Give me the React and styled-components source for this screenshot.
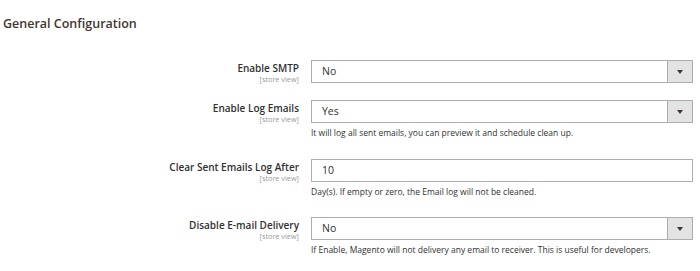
import styled, { createGlobalStyle } from 'styled-components'

const GlobalStyle = createGlobalStyle`
    html, body {
        margin: 0;
        padding: 0;
        background: #fff;
    }
    body {
        font-family: "Open Sans", "Liberation Sans", sans-serif;
        color: #303030;
    }
`

const Page = styled.div`
    width: 700px;
    height: 271px;
    padding: 16px 0 0 3px;
    box-sizing: border-box;
`

const Title = styled.h2`
    margin: 0;
    font-size: 12.5px;
    font-weight: 600;
    color: #41362f;
    line-height: 16px;
`

const Form = styled.div`
    display: grid;
    grid-template-columns: 296px 382px;
    column-gap: 12px;
    margin-top: 28px;
`

const Row = styled.div`
    display: contents;
`

const LabelCell = styled.div`
    text-align: right;
    padding-top: 2px;
    margin-bottom: ${p => p.$space}px;
`

const Label = styled.div`
    font-size: 10px;
    font-weight: 600;
    color: #303030;
    line-height: 13px;
`

const Scope = styled.div`
    font-size: 7.3px;
    color: #999;
    line-height: 9px;
`

const Control = styled.div`
    margin-bottom: ${p => p.$space}px;
`

const Box = styled.div`
    display: flex;
    height: 23px;
    box-sizing: border-box;
    border: 1px solid #adadad;
    background: #fff;
`

const Value = styled.div`
    flex: 1;
    padding-left: 10px;
    font-size: 10.5px;
    line-height: 21px;
    color: #303030;
`

const Toggle = styled.div`
    width: 24px;
    display: flex;
    align-items: center;
    justify-content: center;
    background: #e3e3e3;
    border-left: 1px solid #adadad;
`

const Arrow = styled.span`
    width: 0;
    height: 0;
    border-left: 3px solid transparent;
    border-right: 3px solid transparent;
    border-top: 4px solid #41362f;
`

const Note = styled.div`
    font-size: 8.5px;
    line-height: 11px;
    color: #303030;
    margin-top: 4px;
`

const fields = [
    { label: 'Enable SMTP', value: 'No', select: true, space: 16 },
    { label: 'Enable Log Emails', value: 'Yes', select: true, note: 'It will log all sent emails, you can preview it and schedule clean up.', space: 21 },
    { label: 'Clear Sent Emails Log After', value: '10', note: 'Day(s). If empty or zero, the Email log will not be cleaned.', space: 20 },
    { label: 'Disable E-mail Delivery', value: 'No', select: true, note: 'If Enable, Magento will not delivery any email to receiver. This is useful for developers.', space: 0 },
]

function App() {
    return (
        <>
            <GlobalStyle />
            <Page>
                <Title>General Configuration</Title>
                <Form>
                    {fields.map((f, i) => (
                        <Row key={i}>
                            <LabelCell $space={f.space}>
                                <Label>{f.label}</Label>
                                <Scope>[store view]</Scope>
                            </LabelCell>
                            <Control $space={f.space}>
                                <Box>
                                    <Value>{f.value}</Value>
                                    {f.select && (
                                        <Toggle>
                                            <Arrow />
                                        </Toggle>
                                    )}
                                </Box>
                                {f.note && <Note>{f.note}</Note>}
                            </Control>
                        </Row>
                    ))}
                </Form>
            </Page>
        </>
    )
}

export default App
